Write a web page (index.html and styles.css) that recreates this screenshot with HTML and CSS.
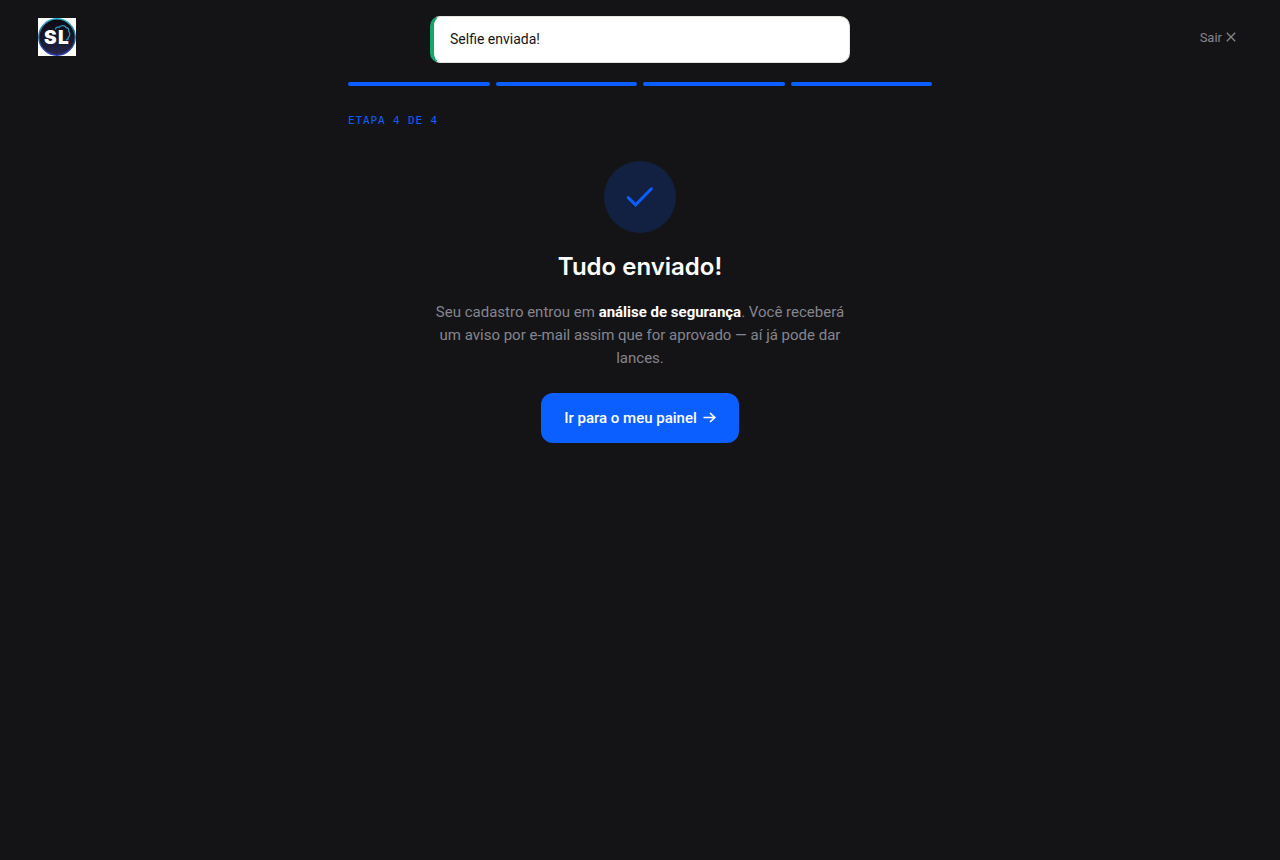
FILE: index.html
```html
<!DOCTYPE html>
<html lang="pt-BR">
<head>
<meta charset="utf-8">
<meta name="viewport" content="width=device-width, initial-scale=1">
<title>Cadastro</title>
<link rel="stylesheet" href="styles.css">
</head>
<body>
<header class="topbar">
  <a class="brand" href="#" aria-label="SL">
    <svg class="brand-logo" viewBox="0 0 38 38" aria-hidden="true">
      <defs>
        <linearGradient id="disc" x1="0" y1="0" x2="0" y2="1">
          <stop offset="0" stop-color="#0b0b12"/>
          <stop offset="0.5" stop-color="#181426"/>
          <stop offset="1" stop-color="#27264f"/>
        </linearGradient>
        <linearGradient id="ring" x1="0" y1="0" x2="0" y2="1">
          <stop offset="0" stop-color="#2fb4d8"/>
          <stop offset="0.5" stop-color="#206a9c"/>
          <stop offset="1" stop-color="#2737a8"/>
        </linearGradient>
      </defs>
      <rect width="38" height="38" fill="#fff"/>
      <circle cx="19" cy="19" r="18.2" fill="url(#disc)" stroke="url(#ring)" stroke-width="1.4"/>
      <path d="M17.500 11.500c0-2 2-2.800 4-2.300 1.500-2.200 5.500-2 6.500.3 2.400.3 3.200 2.200 2.600 4 1.800 1.600 1.500 4.400-.2 5.500.2 1.700-.8 2.800-2.400 2.800" fill="none" stroke="#2596b8" stroke-width="1.300"/>
      <text class="brand-text" x="6" y="26">S</text>
      <text class="brand-text" x="20" y="26">L</text>
    </svg>
  </a>
  <a class="exit" href="#">Sair
    <svg class="exit-icon" viewBox="0 0 10 10" aria-hidden="true"><path d="M.8.8l8.400 8.400M9.200.8L.8 9.200"/></svg>
  </a>
</header>
<div class="toast" role="status">Selfie enviada!</div>
<main class="wizard">
  <div class="steps" aria-hidden="true">
    <span class="step"></span><span class="step"></span><span class="step"></span><span class="step"></span>
  </div>
  <p class="step-label">ETAPA 4 DE 4</p>
  <section class="done">
    <div class="done-badge">
      <svg class="done-icon" viewBox="0 0 34 34" aria-hidden="true"><path d="M5.200 17.600l7.400 7.200L28.400 8.800"/></svg>
    </div>
    <h1 class="done-title">Tudo enviado!</h1>
    <p class="done-text">Seu cadastro entrou em <strong>análise de segurança</strong>. Você receberá um aviso por e-mail assim que for aprovado — aí já pode dar lances.</p>
    <a class="button" href="#">Ir para o meu painel
      <svg class="button-icon" viewBox="0 0 13 12" aria-hidden="true"><path d="M.5 5.500h11M7 1l4.800 4.500L7 10"/></svg>
    </a>
  </section>
</main>
</body>
</html>
```
FILE: styles.css
```css
* {
  box-sizing: border-box;
}

body {
  margin: 0;
  min-height: 100vh;
  background: #141416;
  color: #fff;
  font-family: Roboto, "Liberation Sans", sans-serif;
  font-size: 15px;
}

.topbar {
  display: flex;
  align-items: center;
  justify-content: space-between;
  padding: 18px 44px 18px 38px;
}

.brand-logo {
  display: block;
  width: 38px;
  height: 38px;
}

.brand-text {
  fill: #fff;
  font: 900 19px Inter, sans-serif;
}

.exit {
  display: flex;
  align-items: center;
  gap: 4px;
  color: #85858f;
  font-size: 13px;
  text-decoration: none;
}

.exit-icon {
  width: 10px;
  height: 10px;
  fill: none;
  stroke: currentColor;
  stroke-width: 1.3;
}

.toast {
  position: fixed;
  top: 16px;
  left: 50%;
  width: 420px;
  max-width: calc(100% - 32px);
  padding: 12px 16px;
  transform: translateX(-50%);
  border: 1px solid #e6e4dc;
  border-left: 4px solid #16a56b;
  border-radius: 10px;
  background: #fff;
  color: #141416;
  font-size: 14px;
  line-height: 21px;
}

.wizard {
  max-width: 632px;
  margin: 0 auto;
  padding: 8px 24px 48px;
}

.steps {
  display: flex;
  gap: 6px;
}

.step {
  flex: 1;
  height: 4px;
  border-radius: 2px;
  background: #0b5fff;
}

.step-label {
  margin: 26px 0 0;
  color: #0b5fff;
  font-family: "DejaVu Sans Mono", monospace;
  font-size: 11px;
  line-height: 18px;
  letter-spacing: 0.08em;
}

.done {
  display: flex;
  flex-direction: column;
  align-items: center;
  padding-top: 31px;
  text-align: center;
}

.done-badge {
  display: grid;
  place-items: center;
  width: 72px;
  height: 72px;
  border-radius: 50%;
  background: #122142;
}

.done-icon {
  width: 34px;
  height: 34px;
  fill: none;
  stroke: #0b5fff;
  stroke-width: 3;
  stroke-linecap: round;
}

.done-title {
  margin: 20px 0 0;
  font-family: Inter, sans-serif;
  font-size: 24px;
  font-weight: 600;
  line-height: 28px;
}

.done-text {
  max-width: 420px;
  margin: 20px 0 0;
  color: #85858f;
  line-height: 23px;
}

.done-text strong {
  color: #fff;
}

.button {
  display: flex;
  align-items: center;
  gap: 6px;
  margin-top: 23px;
  padding: 14px 23px;
  border-radius: 12px;
  background: #0b5fff;
  color: #fff;
  font-weight: 500;
  line-height: 22px;
  text-decoration: none;
}

.button-icon {
  width: 13px;
  height: 12px;
  fill: none;
  stroke: currentColor;
  stroke-width: 1.7;
}
```
